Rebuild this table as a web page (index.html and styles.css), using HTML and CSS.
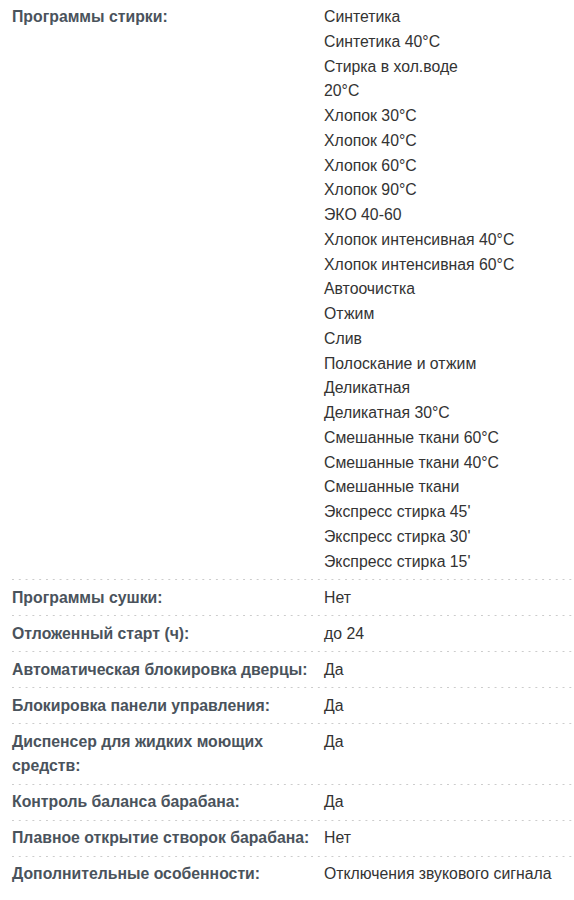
FILE: index.html
```html
<!DOCTYPE html>
<html lang="ru">
<head>
<meta charset="utf-8">
<title>Характеристики</title>
<link rel="stylesheet" href="styles.css">
</head>
<body>
<div class="specs">
  <div class="row">
    <div class="label">Программы стирки:</div>
    <div class="value">
      <div>Синтетика</div>
      <div>Синтетика 40°C</div>
      <div>Стирка в хол.воде</div>
      <div>20°C</div>
      <div>Хлопок 30°C</div>
      <div>Хлопок 40°C</div>
      <div>Хлопок 60°C</div>
      <div>Хлопок 90°C</div>
      <div>ЭКО 40-60</div>
      <div>Хлопок интенсивная 40°C</div>
      <div>Хлопок интенсивная 60°C</div>
      <div>Автоочистка</div>
      <div>Отжим</div>
      <div>Слив</div>
      <div>Полоскание и отжим</div>
      <div>Деликатная</div>
      <div>Деликатная 30°C</div>
      <div>Смешанные ткани 60°C</div>
      <div>Смешанные ткани 40°C</div>
      <div>Смешанные ткани</div>
      <div>Экспресс стирка 45'</div>
      <div>Экспресс стирка 30'</div>
      <div>Экспресс стирка 15'</div>
    </div>
  </div>
  <div class="row">
    <div class="label">Программы сушки:</div>
    <div class="value">Нет</div>
  </div>
  <div class="row">
    <div class="label">Отложенный старт (ч):</div>
    <div class="value">до 24</div>
  </div>
  <div class="row">
    <div class="label">Автоматическая блокировка дверцы:</div>
    <div class="value">Да</div>
  </div>
  <div class="row">
    <div class="label">Блокировка панели управления:</div>
    <div class="value">Да</div>
  </div>
  <div class="row">
    <div class="label">Диспенсер для жидких моющих средств:</div>
    <div class="value">Да</div>
  </div>
  <div class="row">
    <div class="label">Контроль баланса барабана:</div>
    <div class="value">Да</div>
  </div>
  <div class="row">
    <div class="label">Плавное открытие створок барабана:</div>
    <div class="value">Нет</div>
  </div>
  <div class="row">
    <div class="label">Дополнительные особенности:</div>
    <div class="value">Отключения звукового сигнала</div>
  </div>
</div>
</body>
</html>
```
FILE: styles.css
```css
html, body {
  margin: 0;
  padding: 0;
  background: #ffffff;
}

body {
  font-family: "Liberation Sans", Arial, sans-serif;
  font-size: 15.8px;
  line-height: 24.75px;
}

.specs {
  margin-left: 12px;
}

.row {
  display: grid;
  grid-template-columns: 312px 1fr;
  padding: 5px 0 5px;
}

.row:first-child {
  padding-top: 5px;
}

.row + .row {
  background-image: linear-gradient(to right, #cccccc 0, #cccccc 2px, transparent 2px);
  background-size: 6.8px 1px;
  background-repeat: repeat-x;
  background-position: 0 0;
  padding-top: 6.25px;
  padding-bottom: 5px;
}

.label {
  font-weight: bold;
  color: #4a535c;
  padding-right: 4px;
}

.value {
  color: #333333;
}
```
